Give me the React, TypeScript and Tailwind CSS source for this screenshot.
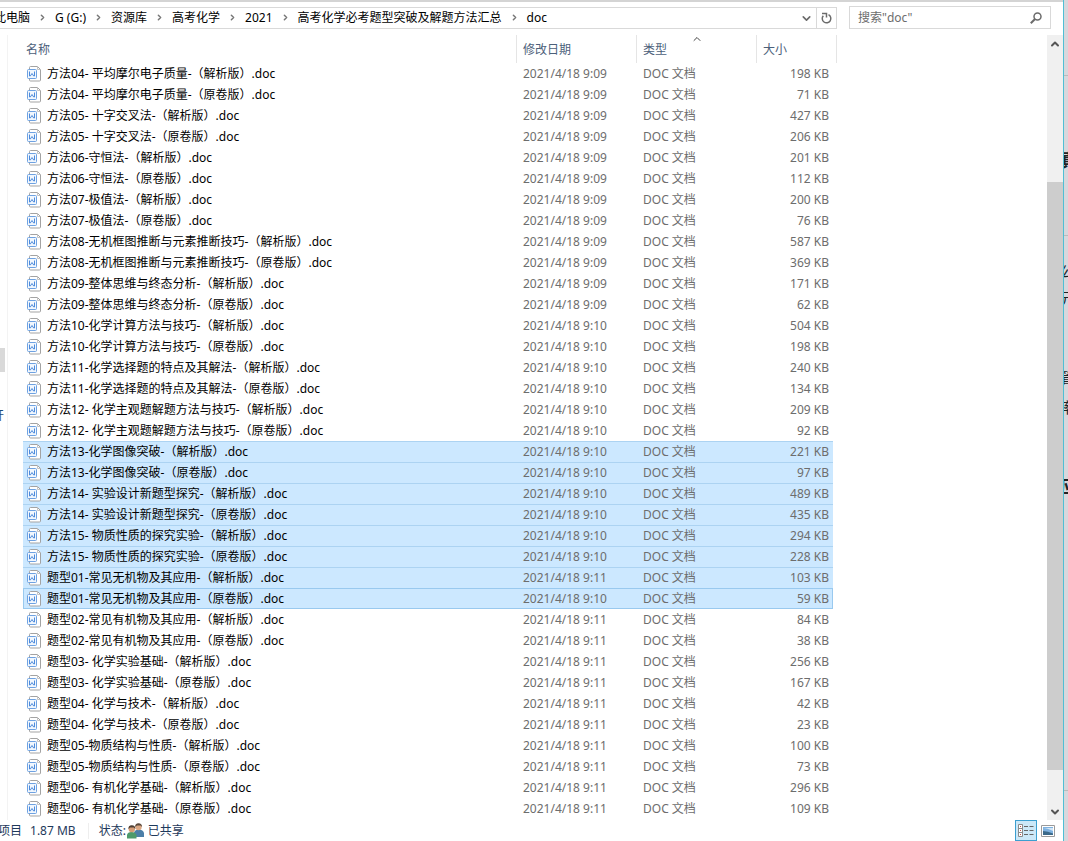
import { ChevronDown, ChevronRight, ChevronUp } from "lucide-react";

type FileRow = {
	name: string;
	time: string;
	size: number;
};

const FIRST_SELECTED = 18;
const LAST_SELECTED = 25;

// every document comes as a pair: answers (解析版) and plain paper (原卷版)
const titles: [string, string, number, string, number][] = [
	["方法04- 平均摩尔电子质量", "9:09", 198, "9:09", 71],
	["方法05- 十字交叉法", "9:09", 427, "9:09", 206],
	["方法06-守恒法", "9:09", 201, "9:09", 112],
	["方法07-极值法", "9:09", 200, "9:09", 76],
	["方法08-无机框图推断与元素推断技巧", "9:09", 587, "9:09", 369],
	["方法09-整体思维与终态分析", "9:09", 171, "9:09", 62],
	["方法10-化学计算方法与技巧", "9:10", 504, "9:10", 198],
	["方法11-化学选择题的特点及其解法", "9:10", 240, "9:10", 134],
	["方法12- 化学主观题解题方法与技巧", "9:10", 209, "9:10", 92],
	["方法13-化学图像突破", "9:10", 221, "9:10", 97],
	["方法14- 实验设计新题型探究", "9:10", 489, "9:10", 435],
	["方法15- 物质性质的探究实验", "9:10", 294, "9:10", 228],
	["题型01-常见无机物及其应用", "9:11", 103, "9:10", 59],
	["题型02-常见有机物及其应用", "9:11", 84, "9:11", 38],
	["题型03- 化学实验基础", "9:11", 256, "9:11", 167],
	["题型04- 化学与技术", "9:11", 42, "9:11", 23],
	["题型05-物质结构与性质", "9:11", 100, "9:11", 73],
	["题型06- 有机化学基础", "9:11", 296, "9:11", 109],
];

const files: FileRow[] = titles.flatMap(([title, t1, s1, t2, s2]) => [
	{ name: `${title}-（解析版）.doc`, time: `2021/4/18 ${t1}`, size: s1 },
	{ name: `${title}-（原卷版）.doc`, time: `2021/4/18 ${t2}`, size: s2 },
]);

const crumbs = [
	"此电脑",
	"G (G:)",
	"资源库",
	"高考化学",
	"2021",
	"高考化学必考题型突破及解题方法汇总",
	"doc",
];

const DocIcon = () => (
	<svg width="14" height="16" viewBox="0 0 14 16" fill="none" className="shrink-0">
		<path d="M2.5 3V1.500q0-1 1-1h7l3 3v10.500q0 1-1 1h-9q-1 0-1-1V13" fill="#fff" stroke="#a3a3a3" />
		<path d="M10.500.500v3h3" stroke="#c4c4c4" />
		<rect x=".5" y="3.5" width="9" height="9" rx="1" fill="#f1f7fe" stroke="#6ea2e2" />
		<path d="M2.500 5.500v4.500h.800L5 7.500l1.700 2.500h.800V5.500" stroke="#4d8bdc" />
	</svg>
);

const SharedIcon = () => (
	<svg width="17" height="16" viewBox="0 0 17 16" className="ml-px">
		<path d="M7 14V9.500Q8 6.500 12 6.500T17 10v4z" fill="#4c7fa8" />
		<circle cx="11.500" cy="4" r="3.200" fill="#dba783" />
		<path d="M8.200 4Q8 .300 11.500.300T15 4l-1.500-1.500H10z" fill="#5b4a3d" />
		<path d="M0 15.500V12q.500-3 4.500-3t5 3v3.500z" fill="#4e9a6b" />
		<circle cx="4.800" cy="6" r="3.200" fill="#d69d76" />
		<path d="M1.500 6.200Q1 2.200 4.800 2.200T8.300 6L6.800 4.500H3z" fill="#4d3f35" />
	</svg>
);

const DetailsIcon = () => (
	<svg width="16" height="13" viewBox="0 0 16 13" fill="none">
		<path d="M.5.500h4v12h-4zM.5 4.500h4M.5 8.500h4" fill="#fff" stroke="#8b8b8b" />
		<path d="M2 2.500h1M2 6.500h1M2 10.500h1" stroke="#c0504d" />
		<path d="M6 2.500h4M11.500 2.500h4M6 6.500h4M11.500 6.500h4M6 10.500h4M11.500 10.500h4" stroke="#666" />
	</svg>
);

const PictureIcon = () => (
	<svg width="14" height="12" viewBox="0 0 14 12" fill="none">
		<path d="M.5.500h13v11H.500z" fill="#fff" stroke="#9a9a9a" />
		<path d="M2 2h10v8H2z" fill="#7fb2e0" />
		<path d="M2 3q4 0 10 3V3z" fill="#d3e7f8" />
		<path d="M2 6q5 0 10 2.500V10H2z" fill="#3c6a8a" />
	</svg>
);

const AddressBar = () => (
	<div className="flex h-[35px] shrink-0 items-start border-t-2 border-[#d4d4d4] pt-1 pr-3">
		<nav
			aria-label="路径"
			className="mt-px flex h-[22px] min-w-0 flex-1 border-y border-r border-[#d9d9d9]"
		>
			<ol className="-ml-1.5 flex min-w-0 flex-1 items-center pb-0.5 whitespace-nowrap">
				{crumbs.map((crumb, i) => (
					<li key={crumb} className="flex items-center">
						{i > 0 && (
							<span className="flex w-[25px] justify-center">
								<ChevronRight size={9} strokeWidth={4} className="text-[#777]" />
							</span>
						)}
						<a href="#" className="text-black">
							{crumb}
						</a>
					</li>
				))}
			</ol>
			<button aria-label="历史记录" className="flex w-5 items-center justify-center">
				<ChevronDown size={13} strokeWidth={3} className="text-[#6b6b6b]" />
			</button>
			<button
				aria-label="刷新"
				className="flex w-5 items-center justify-center border-l border-[#d9d9d9]"
			>
				<svg width="11" height="12" viewBox="0 0 11 12" fill="none" stroke="#6b6b6b">
					<path d="M7.500 2.700a4.300 4.300 0 1 1-5.200 1" strokeWidth="1.500" />
					<path d="M1 1.500h4.500v4" strokeWidth="1.500" />
				</svg>
			</button>
		</nav>
		<label className="ml-3 flex h-[23px] w-[202px] items-center border border-[#d9d9d9] pr-2 pl-2">
			<input
				type="text"
				aria-label="搜索"
				placeholder='搜索"doc"'
				className="min-w-0 flex-1 outline-none placeholder:text-[#6d6d6d]"
			/>
			<svg width="12" height="12" viewBox="0 0 12 12" fill="none" stroke="#6b6b6b">
				<circle cx="7.500" cy="4.500" r="3.500" strokeWidth="1.500" />
				<path d="M5 7 .8 11.200" strokeWidth="2" />
			</svg>
		</label>
	</div>
);

const FileTable = () => (
	<table className="w-[814px] table-fixed border-separate border-spacing-0 text-left">
		<colgroup>
			<col />
			<col className="w-[120px]" />
			<col className="w-[120px]" />
			<col className="w-[76px]" />
			<col className="w-1" />
		</colgroup>
		<thead>
			<tr className="h-7 text-[#4c607a]">
				<th className="border-r border-[#e5e5e5] p-0 pl-[3px] font-normal">名称</th>
				<th className="border-r border-[#e5e5e5] p-0 pl-1.5 font-normal">修改日期</th>
				<th aria-sort="ascending" className="relative border-r border-[#e5e5e5] p-0 pl-1.5 font-normal">
					<ChevronUp
						size={12}
						strokeWidth={2}
						className="absolute top-[-2px] left-1/2 -translate-x-1/2 text-[#444]"
					/>
					类型
				</th>
				<th className="p-0 pl-1.5 font-normal">大小</th>
				<td className="border-r border-[#e5e5e5] p-0"></td>
			</tr>
		</thead>
		<tbody>
			{files.map((file, i) => {
				const selected = i >= FIRST_SELECTED && i <= LAST_SELECTED;
				const focused = i === LAST_SELECTED;
				const cell = focused
					? "border-y border-[#99c9ef] bg-[#cce8ff]"
					: selected
						? "bg-[#cce8ff] shadow-[inset_0_1px_0_#acd3f2]"
						: "";
				return (
					<tr key={file.name} aria-selected={selected} className="h-[21px] text-[#6d6d6d]">
						<td className={`p-0 text-black ${cell} ${focused ? "border-l pl-[3px]" : "pl-1"}`}>
							<div className="flex items-center gap-1.5 whitespace-nowrap">
								<DocIcon />
								{file.name}
							</div>
						</td>
						<td className={`p-0 pl-1.5 ${cell}`}>{file.time}</td>
						<td className={`p-0 pl-1.5 ${cell}`}>DOC 文档</td>
						<td className={`p-0 text-right ${cell} ${focused ? "border-r pr-[3px]" : "pr-1"}`}>
							{file.size} KB
						</td>
						<td className="p-0"></td>
					</tr>
				);
			})}
		</tbody>
	</table>
);

const ScrollBar = () => (
	<div className="flex w-4 shrink-0 flex-col bg-[#f0f0f0]">
		<button aria-label="向上滚动" className="flex h-[18px] items-center justify-center">
			<ChevronUp size={12} strokeWidth={4} className="text-[#555]" />
		</button>
		<div className="grow-[129]"></div>
		<div className="grow-[588] bg-[#cdcdcd]"></div>
		<div className="grow-[33]"></div>
		<button aria-label="向下滚动" className="flex h-[17px] items-center justify-center">
			<ChevronDown size={12} strokeWidth={4} className="text-[#555]" />
		</button>
	</div>
);

const StatusBar = () => (
	<footer className="flex h-[21px] shrink-0 items-center whitespace-nowrap text-[#1e395b]">
		<span className="-ml-0.5">项目</span>
		<span className="ml-2">1.87 MB</span>
		<span className="ml-3 h-4 w-px bg-[#eee]"></span>
		<span className="ml-2.5">状态:</span>
		<SharedIcon />
		<span className="ml-1">已共享</span>
		<button
			aria-label="详细信息"
			aria-pressed="true"
			className="ml-auto flex h-full w-[22px] items-center justify-center border border-[#3c9fd0] bg-[#cce8f8]"
		>
			<DetailsIcon />
		</button>
		<button aria-label="大图标" className="mr-1 flex h-full w-[22px] items-center justify-center">
			<PictureIcon />
		</button>
	</footer>
);

const App = () => {
	return (
		<div className="flex min-h-screen bg-white font-['Noto_Sans','Noto_Sans_CJK_SC',sans-serif] text-[12px] leading-[19px]">
			<main className="flex min-w-0 flex-1 flex-col">
				<AddressBar />
				<div className="flex flex-1">
					<div className="flex w-2 shrink-0 flex-col overflow-hidden border-r border-[#f3f3f3]">
						<div className="mt-[313px] h-6 w-[5px] bg-[#d9d9d9]"></div>
						<div className="mt-[34px] flex w-1 justify-end overflow-hidden text-[#1e4e79]">
							开
						</div>
					</div>
					<div className="min-w-0 flex-1 pl-[15px]">
						<FileTable />
					</div>
					<ScrollBar />
				</div>
				<StatusBar />
			</main>
			{/* edge of the document window behind */}
			<aside className="flex w-[5px] shrink-0 flex-col overflow-hidden border-l border-[#4fbfd4] bg-[#d8d7dc] whitespace-nowrap text-[#222]">
				<div className="h-[76px] border-b border-[#bbb]"></div>
				<div className="mt-[75px] -ml-1 text-[18px] font-bold">真</div>
				<div className="mt-[65px] border-t border-[#bbb]"></div>
				<div className="mt-[26px] -ml-1 text-[15px]">公</div>
				<div className="mt-2 -ml-1 text-[15px]">元</div>
				<div className="mt-[60px] -ml-1 text-[15px]">管</div>
				<div className="mt-[11px] -ml-1 text-[15px]">率</div>
				<div className="mt-[60px] -ml-1 text-[18px] font-bold">应</div>
				<div className="mt-[294px] border-t border-[#bbb]"></div>
			</aside>
		</div>
	);
};

export default App;
